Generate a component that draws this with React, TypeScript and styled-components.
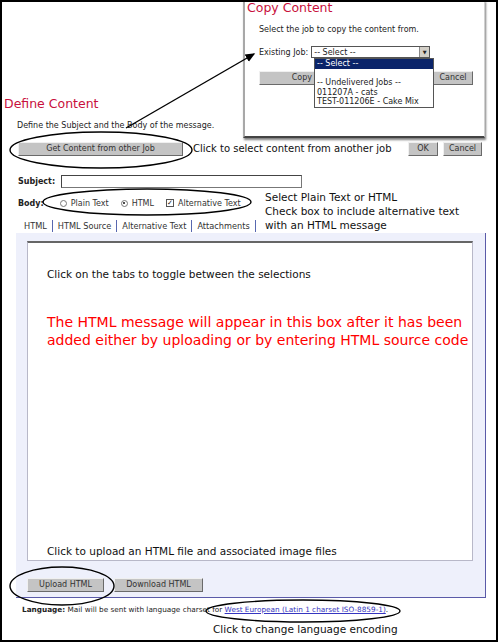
import React from "react";
import styled, { createGlobalStyle } from "styled-components";

const Global = createGlobalStyle`
  html, body { margin: 0; padding: 0; background: #fff; }
  * { box-sizing: border-box; }
`;

const Page = styled.div`
  position: relative;
  width: 498px;
  height: 642px;
  border: 2px solid #000;
  overflow: hidden;
  background: #fff;
  font-family: "DejaVu Sans", Verdana, sans-serif;
  color: #222;
  padding-top: 94px;
`;

const Heading = styled.div`
  font-size: 12.5px;
  line-height: 16px;
  color: #c8103c;
  margin-left: 2px;
`;

const Small = styled.div`
  font-size: 8px;
  line-height: 12px;
  margin: 8px 0 0 15px;
`;

const Note = styled.div`
  font-size: 10.5px;
  line-height: 14px;
  color: #111;
  white-space: nowrap;
`;

const ButtonRow = styled.div<{ $top: number; $left: number }>`
  display: flex;
  align-items: center;
  margin: ${(p) => p.$top}px 0 0 ${(p) => p.$left}px;
  height: 16px;
`;

const Btn = styled.div<{ $w: number; $gap?: number }>`
  width: ${(p) => p.$w}px;
  height: 14px;
  margin-right: ${(p) => p.$gap ?? 0}px;
  background: #c4c4c4;
  border: 1px solid;
  border-color: #f0f0f0 #6a6a6a #6a6a6a #f0f0f0;
  font-size: 8px;
  line-height: 12px;
  text-align: center;
  color: #333;
  white-space: nowrap;
  overflow: hidden;
  flex-shrink: 0;
`;

const LinkNote = styled(Note)`
  font-size: 10px;
  width: 215px;
`;

const FieldRow = styled.div`
  display: flex;
  align-items: center;
  margin: 18px 0 0 16px;
  height: 13px;
`;

const Label = styled.span`
  font-size: 8px;
  font-weight: bold;
  color: #222;
`;

const TextInput = styled.div`
  margin-left: 6px;
  width: 241px;
  height: 13px;
  border: 1px solid #777;
  border-top-color: #444;
  border-left-color: #444;
  background: #fff;
`;

const BodyArea = styled.div`
  display: flex;
  margin-top: 2px;
`;

const BodyLeft = styled.div`
  width: 261px;
  flex-shrink: 0;
`;

const BodyRow = styled.div`
  display: flex;
  align-items: center;
  height: 26px;
  padding-left: 16px;
  font-size: 8px;
`;

const Option = styled.span<{ $ml: number }>`
  display: inline-flex;
  align-items: center;
  margin-left: ${(p) => p.$ml}px;
  color: #333;
`;

const Radio = styled.span<{ $on?: boolean }>`
  position: relative;
  width: 7px;
  height: 7px;
  border-radius: 50%;
  border: 1px solid #777;
  background: #fff;
  margin-right: 4px;
  &::after {
    content: "";
    display: ${(p) => (p.$on ? "block" : "none")};
    position: absolute;
    left: 1.5px;
    top: 1.5px;
    width: 2px;
    height: 2px;
    border-radius: 50%;
    background: #111;
  }
`;

const Check = styled.span`
  width: 8px;
  height: 8px;
  border: 1px solid #555;
  background: #fff;
  margin-right: 4px;
  font-size: 7px;
  line-height: 6px;
  text-align: center;
  font-weight: bold;
  color: #111;
`;

const Tabs = styled.div`
  display: flex;
  margin: 3px 0 0 17px;
  height: 14px;
  align-items: center;
`;

const Tab = styled.span`
  font-size: 8.2px;
  line-height: 12px;
  padding: 0 5px;
  border-right: 1px solid #5868b0;
  color: #333;
`;

const SideNote = styled(Note)`
  padding-left: 2px;
`;

const Panel = styled.div`
  margin-left: 14px;
  width: 470px;
  height: 365px;
  background: #eef0fb;
  border-right: 1px solid #5a5aa8;
  border-bottom: 1px solid #5a5aa8;
  padding: 8px 0 0 11px;
`;

const Editor = styled.div`
  width: 446px;
  height: 320px;
  background: #fff;
  border: 1px solid #b8b8c8;
  border-top: 2px solid #666;
  display: flex;
  flex-direction: column;
  padding: 24px 0 0 19px;
`;

const RedText = styled.div`
  margin-top: 32px;
  font-size: 14px;
  line-height: 18px;
  color: #f00;
  white-space: nowrap;
`;

const Spacer = styled.div`
  flex: 1;
`;

const LangLine = styled.div`
  margin: 6px 0 0 20px;
  font-size: 7.3px;
  line-height: 12px;
  color: #222;
  a {
    color: #3535c0;
    text-decoration: underline;
  }
`;

const EndNote = styled(Note)`
  margin: 6px 0 0 211px;
`;

/* floating dialog window */
const Dialog = styled.div`
  position: absolute;
  left: 241px;
  top: -2px;
  width: 242px;
  height: 138px;
  background: #fff;
  border-left: 2px solid #a8a8a8;
  border-right: 1px solid #d0d0d0;
  border-bottom: 2px solid #444;
  box-shadow: 1px 2px 2px rgba(0, 0, 0, 0.5);
`;

const DialogTitle = styled(Heading)`
  margin: 0 0 0 2px;
`;

const DialogText = styled.div`
  font-size: 8px;
  line-height: 12px;
  margin: 8px 0 0 14px;
`;

const JobRow = styled.div`
  display: flex;
  align-items: center;
  margin: 10px 0 0 14px;
  height: 12px;
  font-size: 8px;
`;

const SelectBox = styled.div`
  margin-left: 3px;
  width: 119px;
  height: 12px;
  border: 1px solid #555;
  display: flex;
  align-items: center;
  font-size: 8px;
  padding-left: 2px;
  position: relative;
`;

const SelectArrow = styled.span`
  position: absolute;
  right: 0;
  top: 0;
  width: 10px;
  height: 10px;
  background: #d4d0c8;
  border-left: 1px solid #888;
  font-size: 5px;
  line-height: 10px;
  text-align: center;
`;

const DropList = styled.div`
  position: absolute;
  left: 69px;
  top: 58px;
  width: 120px;
  height: 50px;
  background: #fff;
  border: 1px solid #555;
  font-size: 8px;
  line-height: 9.6px;
  z-index: 2;
`;

const DropItem = styled.div<{ $sel?: boolean }>`
  height: 9.6px;
  padding-left: 2px;
  background: ${(p) => (p.$sel ? "#0a246a" : "transparent")};
  color: ${(p) => (p.$sel ? "#fff" : "#222")};
  white-space: nowrap;
`;

const Overlay = styled.svg`
  position: absolute;
  left: -2px;
  top: -2px;
  pointer-events: none;
  z-index: 3;
`;

export default function App() {
  return (
    <>
      <Global />
      <Page>
        <Heading>Define Content</Heading>
        <Small>Define the Subject and the Body of the message.</Small>
        <ButtonRow $top={9} $left={16}>
          <Btn $w={165} $gap={10}>Get Content from other Job</Btn>
          <LinkNote>Click to select content from another job</LinkNote>
          <Btn $w={30} $gap={5}>OK</Btn>
          <Btn $w={39}>Cancel</Btn>
        </ButtonRow>

        <FieldRow>
          <Label>Subject:</Label>
          <TextInput />
        </FieldRow>

        <BodyArea>
          <BodyLeft>
            <BodyRow>
              <Label>Body:</Label>
              <Option $ml={16}>
                <Radio />
                Plain Text
              </Option>
              <Option $ml={12}>
                <Radio $on />
                HTML
              </Option>
              <Option $ml={12}>
                <Check>✓</Check>
                Alternative Text
              </Option>
            </BodyRow>
            <Tabs>
              <Tab>HTML</Tab>
              <Tab>HTML Source</Tab>
              <Tab>Alternative Text</Tab>
              <Tab>Attachments</Tab>
            </Tabs>
          </BodyLeft>
          <SideNote>
            Select Plain Text or HTML
            <br />
            Check box to include alternative text
            <br />
            with an HTML message
          </SideNote>
        </BodyArea>

        <Panel>
          <Editor>
            <Note>Click on the tabs to toggle between the selections</Note>
            <RedText>
              The HTML message will appear in this box after it has been
              <br />
              added either by uploading or by entering HTML source code
            </RedText>
            <Spacer />
            <Note style={{ marginBottom: 2 }}>
              Click to upload an HTML file and associated image files
            </Note>
          </Editor>
          <ButtonRow $top={16} $left={0}>
            <Btn $w={77} $gap={10}>Upload HTML</Btn>
            <Btn $w={89}>Download HTML</Btn>
          </ButtonRow>
        </Panel>

        <LangLine>
          <b>Language:</b> Mail will be sent with language charset for{" "}
          <a>West European (Latin 1 charset ISO-8859-1)</a>.
        </LangLine>
        <EndNote>Click to change language encoding</EndNote>

        <Dialog>
          <DialogTitle>Copy Content</DialogTitle>
          <DialogText>Select the job to copy the content from.</DialogText>
          <JobRow>
            Existing Job:
            <SelectBox>
              -- Select --
              <SelectArrow>▼</SelectArrow>
            </SelectBox>
          </JobRow>
          <ButtonRow $top={12} $left={14}>
            <Btn $w={120} $gap={54}>Copy Content</Btn>
            <Btn $w={40}>Cancel</Btn>
          </ButtonRow>
          <DropList>
            <DropItem $sel>-- Select --</DropItem>
            <DropItem />
            <DropItem>-- Undelivered Jobs --</DropItem>
            <DropItem>011207A - cats</DropItem>
            <DropItem>TEST-011206E - Cake Mix</DropItem>
          </DropList>
        </Dialog>

        <Overlay width="498" height="642" viewBox="0 0 498 642">
          <defs>
            <marker id="ah" markerWidth="8" markerHeight="8" refX="6" refY="4" orient="auto">
              <path d="M0,1 L7,4 L0,7 Z" fill="#000" />
            </marker>
          </defs>
          <g fill="none" stroke="#000" strokeWidth="1.4">
            <ellipse cx="101" cy="150" rx="91" ry="18" />
            <ellipse cx="147" cy="202" rx="104" ry="13" />
            <ellipse cx="62" cy="586" rx="52" ry="19" />
            <ellipse cx="303" cy="611" rx="97" ry="11" />
            <line x1="126" y1="128" x2="254" y2="54" markerEnd="url(#ah)" />
          </g>
        </Overlay>
      </Page>
    </>
  );
}
